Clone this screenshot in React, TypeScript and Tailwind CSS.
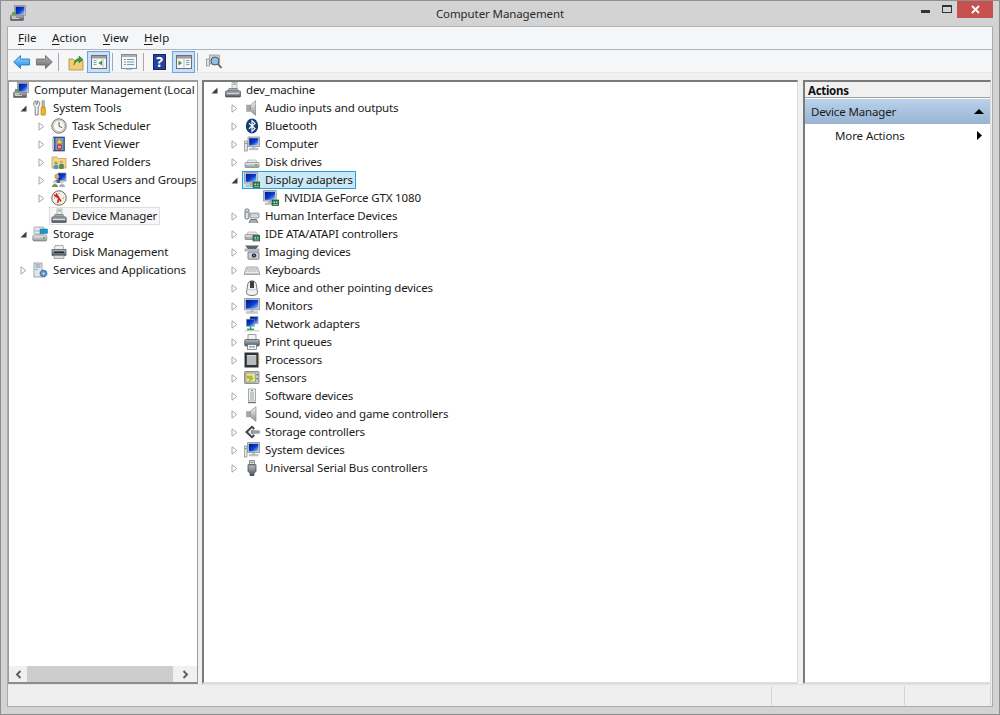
import React from "react";

type IP = { className?: string };
const S = ({ children, className = "" }: { children: React.ReactNode; className?: string }) => (
  <svg viewBox="0 0 16 16" width="16" height="16" className={"shrink-0 " + className}>{children}</svg>
);

const Defs = () => (
  <svg width="0" height="0" className="absolute">
    <defs>
      <linearGradient id="scr" x1="0" y1="0" x2="1" y2="1">
        <stop offset="0" stopColor="#00148c" /><stop offset="0.55" stopColor="#0a3fd0" /><stop offset="1" stopColor="#b4d2f4" />
      </linearGradient>
      <linearGradient id="metal" x1="0" y1="0" x2="0" y2="1">
        <stop offset="0" stopColor="#f2f2f2" /><stop offset="1" stopColor="#8f9498" />
      </linearGradient>
      <linearGradient id="darkm" x1="0" y1="0" x2="0" y2="1">
        <stop offset="0" stopColor="#b8bcc0" /><stop offset="1" stopColor="#4e565c" />
      </linearGradient>
      <linearGradient id="blueb" x1="0" y1="0" x2="0" y2="1">
        <stop offset="0" stopColor="#9fdcff" /><stop offset="1" stopColor="#1c86e0" />
      </linearGradient>
      <linearGradient id="grayb" x1="0" y1="0" x2="0" y2="1">
        <stop offset="0" stopColor="#b4b4b4" /><stop offset="1" stopColor="#6c6c6c" />
      </linearGradient>
    </defs>
  </svg>
);

const Mon = ({ x = 3, y = 1, w = 12, h = 10 }: { x?: number; y?: number; w?: number; h?: number }) => (
  <g>
    <rect x={x} y={y} width={w} height={h} fill="#d4d7da" stroke="#8a8f94" strokeWidth="0.8" />
    <rect x={x + 1.2} y={y + 1.2} width={w - 2.4} height={h - 2.4} fill="url(#scr)" />
    <rect x={x + w / 2 - 1.5} y={y + h} width="3" height="2" fill="#b5b8bb" />
    <rect x={x + 1.5} y={y + h + 2} width={w - 3} height="1.4" fill="#c6c9cc" stroke="#9a9da0" strokeWidth="0.4" />
  </g>
);
const Chip = ({ x = 9, y = 10 }: { x?: number; y?: number }) => (
  <g>
    <rect x={x} y={y} width="7" height="5.5" fill="#2e7d52" stroke="#17452d" strokeWidth="0.6" />
    <rect x={x + 1.5} y={y + 1.5} width="1.5" height="1.5" fill="#c9e8a0" />
    <rect x={x + 4} y={y + 1.5} width="1.5" height="1.5" fill="#9fd8a8" />
    <path d={`M${x + 1} ${y + 4.5}h5`} stroke="#bfe0c0" strokeWidth="0.6" />
  </g>
);
const Drive = ({ led = "#67b82a" }: { led?: string }) => (
  <g>
    <path d="M2.5 9L4 6h8l1.5 3z" fill="#e9ecee" stroke="#9ea3a7" strokeWidth="0.6" />
    <rect x="1" y="8.5" width="14" height="5" rx="1" fill="url(#metal)" stroke="#7e8488" strokeWidth="0.7" />
    <rect x="11" y="10" width="2" height="2" fill={led} />
  </g>
);

const I: Record<string, React.FC<IP>> = {
  computerMgmt: () => (
    <S>
      <rect x="4.5" y="0.5" width="11" height="10" fill="#cfd3d7" stroke="#85898d" strokeWidth="0.7" />
      <rect x="5.6" y="1.6" width="8.8" height="7.8" fill="url(#scr)" />
      <rect x="0.5" y="10" width="13" height="5.4" rx="0.5" fill="url(#darkm)" stroke="#5a6066" strokeWidth="0.6" />
      <rect x="2" y="11.5" width="4" height="1" fill="#e6e6e6" />
      <rect x="2" y="13" width="7" height="0.8" fill="#e6e6e6" />
      <rect x="2" y="7" width="4" height="3" fill="#5fa24a" />
    </S>
  ),
  tools: () => (
    <S>
      <path d="M4 0.8C1.6 1.4 1 4 2.2 5.6L3.2 6.8V15H6.2V6.8L7.2 5.6C8.4 4 7.8 1.4 5.4 0.8V4.2H4Z" fill="#f2f2f2" stroke="#666" strokeWidth="0.8" />
      <rect x="10" y="0.8" width="2.2" height="6.4" fill="#b8bcc0" stroke="#666" strokeWidth="0.5" />
      <rect x="9" y="7" width="4.4" height="8.2" rx="1" fill="#f0b820" stroke="#a87800" strokeWidth="0.6" />
    </S>
  ),
  clock: () => (
    <S>
      <circle cx="8" cy="8" r="7.2" fill="#d8d8cc" stroke="#76787a" strokeWidth="1" />
      <circle cx="8" cy="8" r="5.5" fill="#fbfaf0" stroke="#a8a89c" strokeWidth="0.5" />
      <path d="M8 4v4.2l3 1.5" fill="none" stroke="#444" strokeWidth="0.9" />
    </S>
  ),
  eventv: () => (
    <S>
      <rect x="2.5" y="1" width="11" height="14" fill="#3c5a9a" stroke="#22386a" strokeWidth="0.6" />
      <rect x="1" y="2" width="2" height="12" fill="#c4c8d0" />
      <rect x="4.5" y="2" width="8" height="12" fill="#7e96c6" />
      <path d="M8.5 2.5l3 5h-6z" fill="#f4d040" stroke="#a08000" strokeWidth="0.4" />
      <circle cx="8.5" cy="11" r="2.5" fill="#d84040" stroke="#802020" strokeWidth="0.4" />
      <rect x="7" y="10.5" width="3" height="1" fill="#fff" />
    </S>
  ),
  shared: () => (
    <S>
      <path d="M1 3h5l1 1.5h8V14H1z" fill="#f3d68a" stroke="#b89a4a" strokeWidth="0.7" />
      <circle cx="5" cy="9" r="1.6" fill="#7caa5a" />
      <rect x="2.7" y="11" width="4.6" height="4" rx="1" fill="#5a90c8" />
      <circle cx="10.5" cy="8" r="1.6" fill="#d8a070" />
      <rect x="8.2" y="10" width="4.6" height="5" rx="1" fill="#5c8a44" />
    </S>
  ),
  users: () => (
    <S>
      <rect x="7" y="1" width="8" height="8" fill="url(#scr)" stroke="#8a9098" strokeWidth="0.7" />
      <circle cx="6" cy="4.5" r="2.2" fill="#d8a878" stroke="#7a5a3a" strokeWidth="0.4" />
      <path d="M2.5 11c0-2.5 2-3.5 3.5-3.5S9.5 8.5 9.5 11z" fill="#3c6aa8" />
      <circle cx="4" cy="10" r="1.8" fill="#e8c8a0" />
      <path d="M1 15c0-2 1.4-3 3-3s3 1 3 3z" fill="#689a48" />
      <circle cx="11" cy="10" r="1.8" fill="#e8c8a0" />
      <path d="M8 15c0-2 1.4-3 3-3s3 1 3 3z" fill="#8cb4dc" />
    </S>
  ),
  perf: () => (
    <S>
      <circle cx="8" cy="8" r="7.2" fill="#f4f0e4" stroke="#6a6a6a" strokeWidth="1" />
      <path d="M3 5L8 8l-1.5 5M5 3.5l5 8" fill="none" stroke="#d02020" strokeWidth="1.5" />
      <path d="M8 3v1M13 8h-1M3 8h1" stroke="#555" strokeWidth="0.7" />
    </S>
  ),
  devmgr: () => (
    <S>
      <rect x="6" y="1" width="5" height="6" fill="#e8ecec" stroke="#90959a" strokeWidth="0.6" />
      <rect x="7.5" y="2" width="2" height="1.5" fill="#6ab24a" />
      <path d="M2.5 9.5L4 6.5h8l1.5 3z" fill="#a4abb0" stroke="#5c6268" strokeWidth="0.6" />
      <rect x="0.8" y="9" width="14.4" height="5.5" rx="0.6" fill="url(#darkm)" stroke="#4c5258" strokeWidth="0.7" />
      <rect x="2" y="11" width="12" height="1" fill="#dfe2e4" />
    </S>
  ),
  storage: () => (
    <S>
      <rect x="2" y="1" width="10" height="7" rx="1" fill="#e4e8ea" stroke="#8a9094" strokeWidth="0.7" />
      <rect x="8" y="3" width="7.5" height="4.5" fill="#1c94dc" stroke="#106aa8" strokeWidth="0.5" />
      <path d="M3 5h5" stroke="#9aa0a4" strokeWidth="0.8" />
      <rect x="0.8" y="9" width="14" height="6" rx="1.5" fill="url(#metal)" stroke="#787e82" strokeWidth="0.7" />
      <rect x="11" y="11" width="2" height="2" fill="#67b82a" />
    </S>
  ),
  disk: () => (
    <S>
      <path d="M3 6l1-4.5h8L13 6z" fill="#f0f0f0" stroke="#8c8c8c" strokeWidth="0.7" />
      <rect x="1" y="5.5" width="14" height="6" fill="url(#darkm)" stroke="#50565c" strokeWidth="0.7" />
      <rect x="3" y="7.5" width="10" height="1.5" fill="#26282a" />
      <path d="M3 11.5h10v3H3z" fill="#dcdcdc" stroke="#72787c" strokeWidth="0.6" />
    </S>
  ),
  services: () => (
    <S>
      <rect x="2" y="1" width="8" height="14" fill="#e2e6ea" stroke="#7e8488" strokeWidth="0.7" />
      <path d="M3.5 3h5M3.5 5h5" stroke="#6a7a8a" strokeWidth="0.8" />
      <rect x="3.5" y="7" width="2" height="1" fill="#6aa0d0" />
      <circle cx="11.5" cy="11.5" r="3.4" fill="#5c8ec6" stroke="#2c5a92" strokeWidth="1" strokeDasharray="1.2 .6" />
      <circle cx="11.5" cy="11.5" r="1.1" fill="#e8f0f8" />
    </S>
  ),
  host: () => (
    <S>
      <rect x="7" y="0.5" width="5" height="6.5" fill="#e8ecec" stroke="#90959a" strokeWidth="0.6" />
      <rect x="8.5" y="1.5" width="2" height="1.5" fill="#6ab24a" />
      <path d="M2 9.5L4 6.5h8l2 3z" fill="#a4abb0" stroke="#5c6268" strokeWidth="0.6" />
      <rect x="0.5" y="9" width="15" height="6" rx="0.6" fill="url(#darkm)" stroke="#4c5258" strokeWidth="0.7" />
      <rect x="2" y="11.2" width="12" height="1" fill="#dfe2e4" />
    </S>
  ),
  audio: () => (
    <S>
      <rect x="2.5" y="5" width="4" height="6.5" fill="#a4a8ac" stroke="#8a8e92" strokeWidth="0.4" />
      <path d="M6.5 5l5-4.4v14.8l-5-4.4z" fill="url(#metal)" stroke="#7e8286" strokeWidth="0.6" />
    </S>
  ),
  bluetooth: () => (
    <S>
      <ellipse cx="8" cy="8" rx="6.2" ry="7.6" fill="#123d78" />
      <path d="M5 5.2l6 5.4L8 13.4V2.6l3 2.8-6 5.4" fill="none" stroke="#fff" strokeWidth="1.2" />
    </S>
  ),
  computer: () => (
    <S>
      <rect x="0.5" y="5" width="3" height="10" fill="#dfe2e4" stroke="#777" strokeWidth="0.6" />
      <rect x="1.2" y="7" width="1.6" height="1" fill="#5aa83a" />
      <Mon x={4} y={1} w={11.5} h={9.5} />
    </S>
  ),
  diskdrive: () => <S><Drive /></S>,
  display: () => <S><Mon x={0.6} y={0.6} w={12.6} h={10.4} /><Chip /></S>,
  hid: () => (
    <S>
      <rect x="1" y="1" width="4" height="10" rx="1.6" fill="#dfe2e4" stroke="#4c5054" strokeWidth="0.8" />
      <path d="M2 4h2" stroke="#444" strokeWidth="0.8" />
      <rect x="6" y="5" width="9" height="5" rx="1" fill="#c4c8cc" stroke="#70767a" strokeWidth="0.6" />
      <path d="M7 7h7M7 8.6h7" stroke="#f0f0f0" strokeWidth="0.6" />
      <path d="M5 15l1.5-3.5h6L14 15" fill="#a8adb2" stroke="#55595e" strokeWidth="0.8" />
    </S>
  ),
  ide: () => <S><Drive led="#c4c8cc" /><Chip x={9} y={9.5} /></S>,
  imaging: () => (
    <S>
      <path d="M1 1.5h14L12 5H4z" fill="#5b6268" />
      <rect x="1" y="5" width="14" height="2" fill="#cfd3d6" stroke="#777" strokeWidth="0.5" />
      <rect x="4" y="8" width="11" height="7.2" rx="0.7" fill="#cdd1d4" stroke="#50565a" strokeWidth="0.7" />
      <circle cx="10" cy="11.5" r="2.6" fill="#20252a" stroke="#eee" strokeWidth="0.7" />
      <circle cx="10" cy="11.5" r="1" fill="#5ea0d8" />
    </S>
  ),
  keyboard: () => (
    <S>
      <path d="M2.5 5h11L15.5 10.5v2H0.5v-2z" fill="#eaecee" stroke="#7e8488" strokeWidth="0.7" />
      <path d="M3 7h10M2.4 9h11.2" stroke="#8a8e92" strokeWidth="0.9" strokeDasharray="1 .5" />
      <path d="M1 12h14" stroke="#a0a4a8" strokeWidth="1" />
    </S>
  ),
  mouse: () => (
    <S>
      <path d="M3.5 6C3.5 2.5 5.5 0.8 8 0.8S12.5 2.5 12.5 6l1 6.5C13.5 14.5 11 15.5 8 15.5S2.5 14.5 2.5 12.5z" fill="#eef0f2" stroke="#54585c" strokeWidth="0.8" />
      <path d="M6 1.2v6.8h4V1.2" fill="#3a3e42" />
      <path d="M3.5 9c2 1.2 7 1.2 9 0" fill="none" stroke="#a8acb0" strokeWidth="0.6" />
    </S>
  ),
  monitor: () => <S><Mon x={0.6} y={0.6} w={14.8} h={11.2} /></S>,
  network: () => (
    <S>
      <rect x="6" y="0.7" width="8" height="7" fill="url(#scr)" stroke="#8a9098" strokeWidth="0.6" />
      <rect x="2.5" y="3.2" width="8" height="7" fill="url(#scr)" stroke="#8a9098" strokeWidth="0.6" />
      <path d="M6.5 10.5v2.6" stroke="#22a850" strokeWidth="1.6" />
      <rect x="3" y="12.6" width="7" height="1.6" fill="#22a850" />
      <path d="M0.5 14.8h15" stroke="#b4b8bc" strokeWidth="0.8" />
    </S>
  ),
  print: () => (
    <S>
      <rect x="4" y="0.7" width="8" height="5" fill="#f4f4f4" stroke="#70767a" strokeWidth="0.7" />
      <rect x="0.7" y="5.5" width="14.6" height="6.5" rx="1" fill="url(#darkm)" stroke="#4e5458" strokeWidth="0.7" />
      <rect x="3.5" y="10.5" width="9" height="4.8" fill="#f4f8fb" stroke="#5e6468" strokeWidth="0.7" />
      <rect x="5.5" y="12" width="2" height="1.5" fill="#3a90c8" />
      <rect x="8.5" y="12" width="2" height="1.5" fill="#3a90c8" />
    </S>
  ),
  cpu: () => (
    <S>
      <rect x="0.5" y="0.5" width="14" height="15" fill="#2e3236" />
      <rect x="2.8" y="3" width="9.6" height="10" fill="#b8babc" />
      <path d="M3 3h9v1H3z" fill="#d8dadc" />
      <path d="M15 3v10" stroke="#c8941c" strokeWidth="1" strokeDasharray="1 1" />
    </S>
  ),
  sensor: () => (
    <S>
      <rect x="0.5" y="1.5" width="14.5" height="12" rx="0.6" fill="#c4c8c4" stroke="#6a6e6a" strokeWidth="0.7" />
      <rect x="2" y="3" width="9.5" height="9" fill="#d8e8a8" stroke="#70745c" strokeWidth="0.5" />
      <path d="M3 6h5.5L6.5 8h3L5 11.5l1.4-3H3.6z" fill="#e0b800" stroke="#8a7000" strokeWidth="0.3" />
      <rect x="12.6" y="4" width="1.4" height="1.4" fill="#666" />
      <rect x="12.6" y="8" width="1.4" height="1.4" fill="#666" />
    </S>
  ),
  software: () => (
    <S>
      <rect x="4.5" y="1" width="7" height="12" fill="#f2f4f0" stroke="#80868a" strokeWidth="0.7" />
      <rect x="6" y="3.5" width="4" height="9" fill="#c4c8c8" />
      <rect x="7" y="2" width="2" height="1" fill="#62b832" />
      <path d="M4 14.6h8" stroke="#6e7276" strokeWidth="1.2" />
    </S>
  ),
  sound: () => (
    <S>
      <rect x="2.5" y="5.5" width="4" height="5.5" fill="#a4a8ac" stroke="#8a8e92" strokeWidth="0.4" />
      <path d="M6.5 5l5.5-4.4v14.8l-5.5-4.4z" fill="url(#metal)" stroke="#7e8286" strokeWidth="0.6" />
    </S>
  ),
  storagectl: () => (
    <S>
      <path d="M8 1.5L1 8l7 6.5 3-2.8-4-3.7 4-3.7z" fill="#3c4044" />
      <path d="M8 4L4 8l4 4 1.3-1.3L6.5 8l2.8-2.7z" fill="#f4f4f4" />
      <rect x="7.5" y="6.8" width="8" height="2.4" fill="#9a9ea2" stroke="#5e6266" strokeWidth="0.4" />
    </S>
  ),
  system: () => (
    <S>
      <rect x="0.5" y="4" width="2.5" height="11" fill="#dfe8ec" stroke="#777" strokeWidth="0.6" />
      <rect x="1" y="6" width="1.5" height="1" fill="#5aa83a" />
      <Mon x={3.6} y={0.6} w={12} h={10} />
    </S>
  ),
  usb: () => (
    <S>
      <rect x="5.5" y="0.7" width="5" height="4" fill="#d8dcdf" stroke="#5e6468" strokeWidth="0.7" />
      <rect x="6.8" y="1.8" width="0.9" height="0.9" fill="#444" />
      <rect x="8.4" y="1.8" width="0.9" height="0.9" fill="#444" />
      <path d="M4 4.8h8v6.5l-2 2v2.2H6v-2.2l-2-2z" fill="url(#darkm)" stroke="#34383c" strokeWidth="0.7" />
    </S>
  ),
};

const Closed = () => (
  <svg width="7" height="9" viewBox="0 0 7 9" className="shrink-0">
    <path d="M1 .8L5.8 4.5 1 8.2z" fill="#fff" stroke="#a6a6a6" strokeWidth="1" />
  </svg>
);
const Open = () => (
  <svg width="7" height="7" viewBox="0 0 7 7" className="shrink-0">
    <path d="M6.5 .5V6.5H.5z" fill="#404040" />
  </svg>
);

type RowT = { t: string; i: string; open?: boolean; leaf?: boolean; sel?: "blue" | "gray" };

const Row = ({ t, i, open, leaf, sel, arrowX, iconX }: RowT & { arrowX: number; iconX: number }) => {
  const Icon = I[i];
  return (
    <div className="relative h-[18px] whitespace-nowrap">
      {!leaf && (
        <span className="absolute top-0 h-[18px] flex items-center justify-center w-[8px]" style={{ left: arrowX }}>
          {open ? <Open /> : <Closed />}
        </span>
      )}
      <span
        className={
          "absolute top-0 h-[18px] inline-flex items-center gap-[5px] pl-[1px] pr-[2px] border " +
          (sel === "blue" ? "border-[#26a0da] bg-[#cbe8f6]" : sel === "gray" ? "border-[#dedede] bg-[#f7f7f7]" : "border-transparent")
        }
        style={{ left: iconX - 2 }}
      >
        <Icon />
        <span className="tracking-[-0.15px]">{t}</span>
      </span>
    </div>
  );
};

const left: (RowT & { d: number })[] = [
  { t: "Computer Management (Local", i: "computerMgmt", leaf: true, d: 0 },
  { t: "System Tools", i: "tools", open: true, d: 1 },
  { t: "Task Scheduler", i: "clock", d: 2 },
  { t: "Event Viewer", i: "eventv", d: 2 },
  { t: "Shared Folders", i: "shared", d: 2 },
  { t: "Local Users and Groups", i: "users", d: 2 },
  { t: "Performance", i: "perf", d: 2 },
  { t: "Device Manager", i: "devmgr", leaf: true, sel: "gray", d: 2 },
  { t: "Storage", i: "storage", open: true, d: 1 },
  { t: "Disk Management", i: "disk", leaf: true, d: 2 },
  { t: "Services and Applications", i: "services", d: 1 },
];

const mid: (RowT & { d: number })[] = [
  { t: "dev_machine", i: "host", open: true, d: 0 },
  { t: "Audio inputs and outputs", i: "audio", d: 1 },
  { t: "Bluetooth", i: "bluetooth", d: 1 },
  { t: "Computer", i: "computer", d: 1 },
  { t: "Disk drives", i: "diskdrive", d: 1 },
  { t: "Display adapters", i: "display", open: true, sel: "blue", d: 1 },
  { t: "NVIDIA GeForce GTX 1080", i: "display", leaf: true, d: 2 },
  { t: "Human Interface Devices", i: "hid", d: 1 },
  { t: "IDE ATA/ATAPI controllers", i: "ide", d: 1 },
  { t: "Imaging devices", i: "imaging", d: 1 },
  { t: "Keyboards", i: "keyboard", d: 1 },
  { t: "Mice and other pointing devices", i: "mouse", d: 1 },
  { t: "Monitors", i: "monitor", d: 1 },
  { t: "Network adapters", i: "network", d: 1 },
  { t: "Print queues", i: "print", d: 1 },
  { t: "Processors", i: "cpu", d: 1 },
  { t: "Sensors", i: "sensor", d: 1 },
  { t: "Software devices", i: "software", d: 1 },
  { t: "Sound, video and game controllers", i: "sound", d: 1 },
  { t: "Storage controllers", i: "storagectl", d: 1 },
  { t: "System devices", i: "system", d: 1 },
  { t: "Universal Serial Bus controllers", i: "usb", d: 1 },
];

const Sep = () => <div className="w-px h-[18px] bg-[#a9a9a9]" />;

const Toggled = ({ children }: { children: React.ReactNode }) => (
  <div className="w-[23px] h-[22px] bg-[#c9e0f7] border border-[#66a7e8] flex items-center justify-center">{children}</div>
);

const PaneGlyph = ({ side }: { side: "l" | "r" }) => (
  <svg width="16" height="14" viewBox="0 0 16 14">
    <rect x="0.5" y="0.5" width="15" height="13" fill="#f6f6f6" stroke="#6e7072" />
    <rect x="1" y="1" width="14" height="2.5" fill="#9a9c9e" />
    {side === "l" ? (
      <>
        <path d="M2.5 5.5h3M2.5 7.5h3M2.5 9.5h3" stroke="#78a6cf" />
        <path d="M11 5.5v5L7.5 8z" fill="#2c9a3c" />
        <path d="M12 4v8.5" stroke="#bbb" />
      </>
    ) : (
      <>
        <path d="M2.5 5.5v5L6 8z" fill="#2c9a3c" />
        <path d="M8 4v8.5" stroke="#bbb" />
        <path d="M10 5.5h3.5M10 7.5h3.5M10 9.5h3.5" stroke="#78a6cf" />
      </>
    )}
  </svg>
);

export default function App() {
  return (
    <div className="relative w-[1000px] h-[715px] overflow-hidden bg-[#d3d3d3] border border-[#8f8f8f] text-[11.5px] leading-[18px] text-[#1a1a1a] [font-family:'Noto_Sans',sans-serif]">
      <Defs />
      {/* title bar */}
      <div className="absolute left-[9px] top-[4px]">
        <I.computerMgmt />
      </div>
      <div className="absolute left-0 right-0 top-[4px] text-center text-[#2b2b2b] tracking-[-0.1px]">Computer Management</div>
      <div className="absolute left-[920px] top-[9px] w-[9px] h-[3px] bg-[#333]" />
      <div className="absolute left-[941px] top-[4px] w-[10px] h-[8px] border border-[#333] border-t-[2px]" />
      <div className="absolute left-[956px] top-0 w-[36px] h-[17px] bg-[#c75050] flex items-center justify-center">
        <svg width="9" height="9" viewBox="0 0 9 9">
          <path d="M1 1l7 7M8 1l-7 7" stroke="#fff" strokeWidth="1.8" />
        </svg>
      </div>

      {/* client */}
      <div className="absolute left-[6px] top-[25px] w-[986px] h-[681px] flex flex-col bg-[#f0f0f0] border-l border-r border-b border-[#ababab]">
        {/* menu */}
        <div className="h-[24px] bg-[#f5f6f7] border-t border-b border-[#b4b4b4] relative shrink-0">
          {[
            ["F", "ile", 10],
            ["A", "ction", 44],
            ["V", "iew", 95],
            ["H", "elp", 136],
          ].map(([a, b, x]) => (
            <span key={String(a)} className="absolute top-[2px] tracking-[0.05px]" style={{ left: Number(x) }}>
              <span className="underline underline-offset-2">{a}</span>
              {b}
            </span>
          ))}
        </div>
        {/* toolbar */}
        <div className="h-[23px] bg-[#f5f6f7] border-b border-[#e8e8e8] relative shrink-0">
          <svg className="absolute left-[5px] top-[4px]" width="17" height="16" viewBox="0 0 17 16">
            <path d="M.7 8L7.5 1.5V5h9v6h-9v3.5z" fill="url(#blueb)" stroke="#1a6fc0" strokeWidth="0.8" />
          </svg>
          <svg className="absolute left-[28px] top-[4px]" width="17" height="16" viewBox="0 0 17 16">
            <path d="M16.3 8L9.5 1.5V5h-9v6h9v3.5z" fill="url(#grayb)" stroke="#666" strokeWidth="0.8" />
          </svg>
          <div className="absolute left-[50px] top-[3px]"><Sep /></div>
          <svg className="absolute left-[60px] top-[4px]" width="16" height="17" viewBox="0 0 16 17">
            <path d="M1 5h4l1 1.5h9V16H1z" fill="#f2cd78" stroke="#a98a44" strokeWidth="0.8" />
            <path d="M6 11C6 6 9 4.5 11 4.5V2l4 3.5-4 3.5V6.5C9 6.5 7 8 6 11z" fill="#38a03c" stroke="#1f6c26" strokeWidth="0.5" />
          </svg>
          <div className="absolute left-[79px] top-px"><Toggled><PaneGlyph side="l" /></Toggled></div>
          <div className="absolute left-[104px] top-[3px]"><Sep /></div>
          <svg className="absolute left-[113px] top-[4px]" width="16" height="17" viewBox="0 0 16 17">
            <rect x="0.5" y="0.5" width="15" height="14" fill="#f4f6f8" stroke="#8a8c8e" />
            <rect x="1" y="1" width="14" height="2" fill="#aab0b4" />
            <path d="M3 5.5h2M6 5.5h7M3 8h2M6 8h7M3 10.5h2M6 10.5h7" stroke="#7b9ab5" />
            <path d="M5 14.5h6v1H5z" fill="#41a5e0" />
          </svg>
          <div className="absolute left-[135px] top-[3px]"><Sep /></div>
          <div className="absolute left-[145px] top-[4px] w-[13px] h-[16px] bg-[#28409c] border border-[#14246c] flex items-center justify-center text-white font-bold text-[14px] leading-none">?</div>
          <div className="absolute left-[164px] top-px"><Toggled><PaneGlyph side="r" /></Toggled></div>
          <div className="absolute left-[189px] top-[3px]"><Sep /></div>
          <svg className="absolute left-[198px] top-[4px]" width="16" height="16" viewBox="0 0 16 16">
            <rect x="0.5" y="5" width="3" height="7" fill="#dfe2e4" stroke="#777" strokeWidth="0.6" />
            <rect x="3.5" y="1" width="10" height="9" fill="#c8ccd0" stroke="#888" strokeWidth="0.6" />
            <circle cx="9" cy="7" r="4" fill="#8fc0e8" stroke="#555" strokeWidth="1" />
            <path d="M12 10l3.5 4" stroke="#555" strokeWidth="1.6" />
          </svg>
        </div>

        {/* panes */}
        <div className="flex-1 relative bg-[#f0f0f0]">
          {/* left */}
          <div className="absolute left-0 top-[7px] w-[190px] h-[604px] bg-white border-l border-t-2 border-r border-b-2 border-[#9b9b9b] border-b-[#8c8c8c] overflow-hidden">
            <div className="relative -mt-px">
              {left.map((r) => (
                <Row key={r.t} {...r} arrowX={r.d === 1 ? 10 : 28} iconX={r.d === 0 ? 4 : r.d === 1 ? 23 : 42} />
              ))}
            </div>
            <div className="absolute left-0 right-0 bottom-0 h-[16px] bg-[#f0f0f0] flex items-center">
              <div className="w-[18px] h-full flex items-center justify-center">
                <svg width="7" height="9" viewBox="0 0 7 9"><path d="M5.5 1L2 4.5 5.5 8" fill="none" stroke="#606060" strokeWidth="2" /></svg>
              </div>
              <div className="flex-1 h-full bg-[#cdcdcd]" />
              <div className="w-[24px] h-full flex items-center justify-center">
                <svg width="7" height="9" viewBox="0 0 7 9"><path d="M1.5 1L5 4.5 1.5 8" fill="none" stroke="#606060" strokeWidth="2" /></svg>
              </div>
            </div>
          </div>
          {/* middle */}
          <div className="absolute left-[194px] top-[7px] w-[596px] h-[604px] bg-white border-l-2 border-t-2 border-[#7a7a7a] border-r border-r-[#dcdcdc] border-b-2 border-b-[#dcdcdc] overflow-hidden">
            <div className="-mt-px">
              {mid.map((r) => (
                <Row key={r.t} {...r} arrowX={r.d === 0 ? 6 : 26} iconX={r.d === 0 ? 21 : r.d === 1 ? 40 : 59} />
              ))}
            </div>
          </div>
          {/* right */}
          <div className="absolute left-[795px] top-[7px] w-[188px] h-[604px] bg-white border-l-2 border-t-2 border-[#7a7a7a] border-r border-r-[#dcdcdc] border-b-2 border-b-[#dcdcdc] overflow-hidden">
            <div className="h-[15px] bg-[#f0f0f0] border-b border-[#a0a0a0] pl-[3px] font-bold leading-[17px] tracking-[-0.3px] text-[#111] box-content">Actions</div>
            <div className="mt-px h-[25px] bg-[linear-gradient(#bad2ea,#98b4d2)] flex items-center justify-between pl-[6px] pr-[6px] tracking-[-0.15px]">
              <span>Device Manager</span>
              <svg width="10" height="5" viewBox="0 0 10 5"><path d="M5 0L10 5H0z" fill="#000" /></svg>
            </div>
            <div className="h-[23px] flex items-center justify-between pl-[30px] pr-[8px] tracking-[-0.1px]">
              <span>More Actions</span>
              <svg width="5" height="9" viewBox="0 0 5 9"><path d="M0 0l5 4.5L0 9z" fill="#000" /></svg>
            </div>
          </div>
        </div>

        {/* status */}
        <div className="h-[22px] bg-[#efefef] border-t border-[#e2e2e2] relative shrink-0">
          <div className="absolute left-[763px] top-[1px] bottom-[1px] w-px bg-[#d4d4d4]" />
          <div className="absolute left-[896px] top-[1px] bottom-[1px] w-px bg-[#d4d4d4]" />
          <div className="absolute left-[982px] top-[1px] bottom-[1px] w-px bg-[#d4d4d4]" />
        </div>
      </div>
    </div>
  );
}
